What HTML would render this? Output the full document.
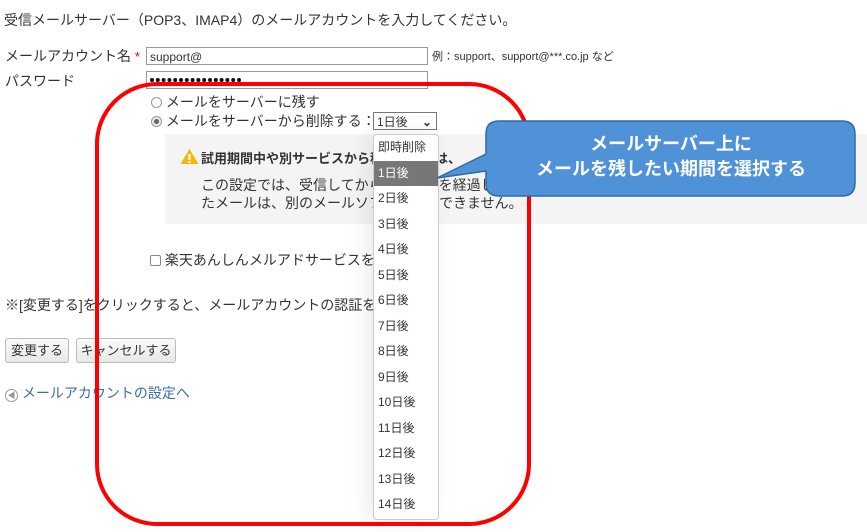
<!DOCTYPE html><html><head><meta charset="utf-8"><style>
body{margin:0;width:867px;height:532px;background:#fff;font-family:"Liberation Sans","Noto Sans CJK JP",sans-serif;color:#333;position:relative;overflow:hidden;font-size:14px}
.a{position:absolute;white-space:nowrap}
.inp{position:absolute;border:1px solid #999;background:#fff;height:18px;font-size:12px;line-height:18px;padding-left:3px;box-sizing:border-box}
.btn{position:absolute;border:1px solid #bbb;border-radius:3px;background:linear-gradient(#fafafa,#e8e8e8);font-size:13px;height:25px;line-height:23px;text-align:center;box-sizing:border-box}
.dd{position:absolute;left:373px;top:134px;width:64px;height:384px;background:#fff;border:1px solid #ccc;border-radius:4px;box-shadow:-6px 0 20px rgba(0,0,0,.08);font-size:12px}
.dd div{height:25.5px;line-height:25.5px;padding-left:4px}
</style></head><body>
<div class="a" style="left:4px;top:10px">受信メールサーバー（POP3、IMAP4）のメールアカウントを入力してください。</div>
<div class="a" style="left:5px;top:46px;font-size:14px">メールアカウント名 <span style="color:#d00;font-size:13px">*</span></div>
<div class="inp" style="left:146px;top:47px;width:282px">support@</div>
<div class="a" style="left:432px;top:48px;font-size:11px">例：support、support@***.co.jp など</div>
<div class="a" style="left:5px;top:71px;font-size:14px">パスワード</div>
<div class="inp" style="left:146px;top:71px;width:282px"></div>
<svg style="position:absolute;left:146px;top:71px" width="100" height="18"><g fill="#111">
<circle cx="6" cy="9" r="2"/><circle cx="11.8" cy="9" r="2"/><circle cx="17.6" cy="9" r="2"/><circle cx="23.4" cy="9" r="2"/><circle cx="29.2" cy="9" r="2"/><circle cx="35" cy="9" r="2"/><circle cx="40.8" cy="9" r="2"/><circle cx="46.6" cy="9" r="2"/><circle cx="52.4" cy="9" r="2"/><circle cx="58.2" cy="9" r="2"/><circle cx="64" cy="9" r="2"/><circle cx="69.8" cy="9" r="2"/><circle cx="75.6" cy="9" r="2"/><circle cx="81.4" cy="9" r="2"/><circle cx="87.2" cy="9" r="2"/><circle cx="93" cy="9" r="2"/></g></svg>
<div class="a" style="left:151px;top:92px"><span style="display:inline-block;width:9px;height:9px;border:1px solid #999;border-radius:50%;vertical-align:-1px"></span> メールをサーバーに残す</div>
<div class="a" style="left:151px;top:111px"><span style="display:inline-block;width:9px;height:9px;border:1px solid #999;border-radius:50%;vertical-align:-1px;background:radial-gradient(#666 35%,#eee 45%)"></span> メールをサーバーから削除する：</div>
<div class="inp" style="left:373px;top:112px;width:64px;height:18px;border-color:#777">1日後<span style="position:absolute;right:4px;top:0;font-weight:bold">⌄</span></div>
<div style="position:absolute;left:165px;top:134px;width:702px;height:90px;background:#f4f4f4"></div>
<svg style="position:absolute;left:180px;top:148px" width="19" height="17"><path d="M9.5 1 L18.5 16 H0.5Z" fill="#f2b90c"/><rect x="8.5" y="6" width="2" height="6" fill="#fff"/><rect x="8.5" y="13" width="2" height="2" fill="#fff"/></svg>
<div class="a" style="left:201px;top:148px;font-weight:bold;font-size:13px">試用期間中や別サービスから移行期間中は、</div>
<div class="a" style="left:201px;top:175px">この設定では、受信してから指定日数を経過したメールを自動削除します。削除し</div>
<div class="a" style="left:201px;top:193px">たメールは、別のメールソフトで受信できません。</div>
<div class="a" style="left:150px;top:250px"><span style="display:inline-block;width:9px;height:9px;border:1px solid #888;border-radius:2px;vertical-align:-1px"></span> 楽天あんしんメルアドサービスを利用する</div>
<div class="a" style="left:5px;top:295px">※[変更する]をクリックすると、メールアカウントの認証を行います。</div>
<div class="btn" style="left:5px;top:338px;width:64px">変更する</div>
<div class="btn" style="left:76px;top:338px;width:100px">キャンセルする</div>
<div class="a" style="left:5px;top:383px;color:#3a6ea8"><span style="display:inline-block;width:11px;height:11px;border:1px solid #999;border-radius:50%;color:#999;font-size:8px;line-height:11px;text-align:center;vertical-align:0">◀</span> メールアカウントの設定へ</div>
<div class="dd"><div>即時削除</div><div style="background:#777;color:#fff">1日後</div><div>2日後</div><div>3日後</div><div>4日後</div><div>5日後</div><div>6日後</div><div>7日後</div><div>8日後</div><div>9日後</div><div>10日後</div><div>11日後</div><div>12日後</div><div>13日後</div><div>14日後</div></div>
<div style="position:absolute;left:95px;top:82px;width:436px;height:444px;border:4px solid #f00;border-radius:62px;box-sizing:border-box"></div>
<svg style="position:absolute;left:0;top:0" width="867" height="532"><path d="M499 121 H842 Q855 121 855 134 V183 Q855 196 842 196 H499 Q486 196 486 183 V171 L437 178 L486 154 V134 Q486 121 499 121Z" fill="#4f92d8" stroke="#2f6aa8" stroke-width="1.5"/></svg>
<div class="a" style="left:486px;top:132px;width:370px;text-align:center;color:#fff;font-weight:bold;font-size:18px;line-height:25px">メールサーバー上に<br>メールを残したい期間を選択する</div>
</body></html>
